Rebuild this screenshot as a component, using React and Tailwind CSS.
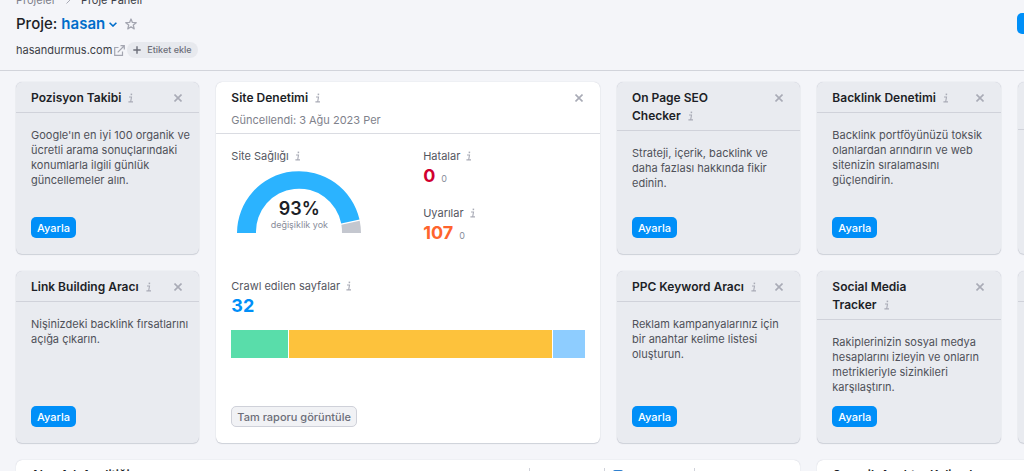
const InfoIcon = () => (
  <svg viewBox="0 0 6 10" className="h-2.5 w-1.5 shrink-0" fill="none" stroke="#a9abb6" strokeWidth="1.1" aria-hidden="true">
    <path d="M1 4h2.5L2.7 8.6M0.4 8.9h4.6" />
    <path d="M3.4 0.6v1.6" strokeWidth="1.5" />
  </svg>
);

const CloseButton = () => (
  <button type="button" aria-label="Kapat" className="flex h-[18px] w-3 shrink-0 items-center justify-center">
    <svg viewBox="0 0 8 8" className="h-2 w-2" stroke="#a9abb6" strokeWidth="1.6" fill="none">
      <path d="M0.5 0.5l7 7M7.5 0.5L0.5 7.5" />
    </svg>
  </button>
);

const Title = ({ children }) => {
  const words = children.split(" ");
  const last = words.pop();
  return (
    <h2 className="text-xs leading-[18px] font-semibold text-[#1d1f27]">
      {words.join(" ")}{" "}
      <span className="inline-flex items-center gap-[7px] align-top whitespace-nowrap">
        {last}
        <InfoIcon />
      </span>
    </h2>
  );
};

const Label = ({ children }) => (
  <div className="flex items-center gap-1.5 text-[11px] leading-4 text-[#55575f]">
    {children}
    <InfoIcon />
  </div>
);

const Count = ({ value, delta, color }) => (
  <p className={`flex items-baseline gap-1.5 text-lg leading-6 font-bold ${color}`}>
    {value}
    {delta !== undefined && <span className="text-[9px] font-normal text-[#898d9a]">{delta}</span>}
  </p>
);

function SetupCard({ title, text }) {
  return (
    <section className="flex flex-col rounded-md bg-[#e9ebf0] shadow-[0_0_1px_#b9bcc8,0_1px_1px_#d0d3da]">
      <header className="flex items-start justify-between gap-3 border-b border-[#d0d2da] px-[15px] pt-[7px] pb-[5px]">
        <Title>{title}</Title>
        <CloseButton />
      </header>
      <div className="flex flex-1 flex-col items-start pt-[15px] pr-[7px] pb-4 pl-[15px]">
        <p className="text-[11px] leading-[15px] text-[#4f5159]">{text}</p>
        <button type="button" className="mt-auto h-[21px] rounded-[5px] bg-[#008ff8] px-1.5 text-[11px] leading-4 font-medium text-white">
          Ayarla
        </button>
      </div>
    </section>
  );
}

function Gauge() {
  return (
    <div className="mt-[7px] ml-1.5 grid w-[124px]">
      <svg viewBox="0 0 124 62" className="col-start-1 row-start-1 w-full" aria-hidden="true">
        <path d="M0 62A62 62 0 0 1 122.5 48.6L104.2 52.5A43 43 0 0 0 19 62Z" fill="#2bb3ff" />
        <path d="M122.7 49.8A62 62 0 0 1 124 62H105A43 43 0 0 0 104.4 53.7Z" fill="#c4c7cf" />
      </svg>
      <div className="col-start-1 row-start-1 self-end text-center">
        <div className="text-lg leading-5 font-semibold text-[#1d1f27]">93%</div>
        <div className="pb-0.5 text-[9px] leading-3 text-[#898d9a]">değişiklik yok</div>
      </div>
    </div>
  );
}

function AuditCard() {
  return (
    <section className="col-span-2 row-span-2 flex flex-col rounded-md bg-white shadow-[0_0_1px_#b9bcc8,0_1px_1px_#d0d3da]">
      <header className="flex items-start justify-between border-b border-[#dadce2] px-[15px] pt-[7px] pb-[5px]">
        <div>
          <Title>Site Denetimi</Title>
          <p className="mt-[5px] text-[11px] leading-4 text-[#7f828c]">Güncellendi: 3 Ağu 2023 Per</p>
        </div>
        <CloseButton />
      </header>
      <div className="flex flex-1 flex-col px-[15px] pt-3.5 pb-4">
        <div className="grid grid-cols-2 gap-x-[30px]">
          <div>
            <Label>Site Sağlığı</Label>
            <Gauge />
          </div>
          <div>
            <Label>Hatalar</Label>
            <Count value="0" delta="0" color="text-[#d1002f]" />
            <div className="mt-3.5">
              <Label>Uyarılar</Label>
              <Count value="107" delta="0" color="text-[#ff642d]" />
            </div>
          </div>
        </div>
        <div className="mt-[30px]">
          <Label>Crawl edilen sayfalar</Label>
          <Count value="32" color="text-[#008ff8]" />
        </div>
        <div className="mt-3 flex h-7 gap-px">
          <div className="w-[16%] bg-[#59ddaa]" />
          <div className="flex-1 bg-[#fdc23c]" />
          <div className="w-[9%] bg-[#8ecdff]" />
        </div>
        <button type="button" className="mt-auto h-[21px] self-start rounded-[5px] border border-[#cfd1d9] bg-[#f1f2f5] px-[5px] text-[11px] leading-4 font-medium text-[#6c6e79]">
          Tam raporu görüntüle
        </button>
      </div>
    </section>
  );
}

export default function App() {
  return (
    <div className="h-screen overflow-hidden bg-[#f4f5f9] font-[Inter,sans-serif]">
      <div className="min-w-[1217px]">
        <div className="-mt-2 flex items-end justify-between border-b border-[#d2d4db] px-4 pb-3">
          <div>
            <nav className="flex items-center gap-2.5 text-[11px] leading-4">
              <a href="#projeler" className="text-[#7f828c]">Projeler</a>
              <svg viewBox="0 0 5 8" className="h-2 w-[5px]" fill="none" stroke="#a9abb6" aria-hidden="true"><path d="M0.5 0.5L4 4L0.5 7.5" /></svg>
              <span className="text-[#3c3e47]">Proje Paneli</span>
            </nav>
            <div className="mt-1.5 flex items-center text-[15px] leading-5 font-semibold">
              <h1 className="font-medium text-[#1d1f27]">Proje:</h1>
              <button type="button" className="ml-1 flex items-center gap-1 text-[#006dca]">
                hasan
                <svg viewBox="0 0 8 5" className="h-[5px] w-2" fill="none" stroke="currentColor" strokeWidth="1.6" aria-hidden="true"><path d="M0.6 0.7L4 4L7.4 0.7" /></svg>
              </button>
              <button type="button" aria-label="Favori" className="ml-2">
                <svg viewBox="0 0 12 12" className="h-3 w-3" fill="none" stroke="#a4a6b1" strokeWidth="1.3" strokeLinejoin="round"><path d="M6 1L7.4 4.4L11.2 4.7L8.3 7.1L9.2 10.9L6 8.8L2.8 10.9L3.7 7.1L0.8 4.7L4.6 4.4Z" /></svg>
              </button>
            </div>
            <div className="mt-2 flex items-center text-[11px] leading-4">
              <a href="#site" className="flex items-center gap-0.5 text-[#3c3e47]">
                hasandurmus.com
                <svg viewBox="0 0 11 11" className="h-[11px] w-[11px]" fill="none" stroke="#a4a6b1" strokeWidth="1.2" aria-hidden="true"><path d="M4.5 2.5H0.7V10.3H8.5V6.5M3.7 7.3L10 1M6.5 0.7H10.3V4.5" /></svg>
              </a>
              <button type="button" className="ml-0.5 flex h-4 items-center gap-1.5 rounded-full bg-[#e7e9ee] px-1.5 text-[9px] font-medium text-[#6c6e79]">
                <svg viewBox="0 0 8 8" className="h-2 w-2" stroke="currentColor" strokeWidth="1.4" aria-hidden="true"><path d="M4 0.3v7.4M0.3 4h7.4" /></svg>
                Etiket ekle
              </button>
            </div>
          </div>
          <button type="button" aria-label="Proje oluştur" className="mb-6 h-[21px] w-[184px] rounded-[5px] bg-[#008ff8]" />
        </div>

        <main className="grid auto-rows-[172px] grid-cols-6 gap-[17px] px-4 pt-[11px]">
          <SetupCard title="Pozisyon Takibi" text="Google'ın en iyi 100 organik ve ücretli arama sonuçlarındaki konumlarla ilgili günlük güncellemeler alın." />
          <AuditCard />
          <SetupCard title="On Page SEO Checker" text="Strateji, içerik, backlink ve daha fazlası hakkında fikir edinin." />
          <SetupCard title="Backlink Denetimi" text="Backlink portföyünüzü toksik olanlardan arındırın ve web sitenizin sıralamasını güçlendirin." />
          <section className="rounded-md bg-[#e9ebf0] shadow-[0_0_1px_#b9bcc8,0_1px_1px_#d0d3da]">
            <div className="h-12 border-b border-[#d0d2da]" />
          </section>
          <SetupCard title="Link Building Aracı" text="Nişinizdeki backlink fırsatlarını açığa çıkarın." />
          <SetupCard title="PPC Keyword Aracı" text="Reklam kampanyalarınız için bir anahtar kelime listesi oluşturun." />
          <SetupCard title="Social Media Tracker" text="Rakiplerinizin sosyal medya hesaplarını izleyin ve onların metrikleriyle sizinkileri karşılaştırın." />
          <section className="rounded-md bg-[#e9ebf0] shadow-[0_0_1px_#b9bcc8,0_1px_1px_#d0d3da]">
            <div className="h-[31px] border-b border-[#d0d2da]" />
          </section>
          <section className="col-span-4 flex items-start justify-between rounded-md bg-white px-[15px] pt-1.5 shadow-[0_0_1px_#b9bcc8]">
            <h2 className="text-xs leading-[18px] font-semibold text-[#1d1f27]">Alan Adı Analitiği</h2>
            <div className="mt-0.5 mr-[90px] flex h-[18px] items-stretch">
              <span className="w-[75px] border-l border-[#d0d2da]" />
              <span className="w-[91px] border-x border-[#d0d2da] pt-0.5 pl-2">
                <span className="block h-2.5 w-2.5 rounded-xs bg-[#2f80cf]" />
              </span>
            </div>
          </section>
          <section className="col-span-2 rounded-md bg-white px-[15px] pt-1.5 shadow-[0_0_1px_#b9bcc8]">
            <h2 className="text-xs leading-[18px] font-semibold text-[#1d1f27]">Organik Anahtar Kelimeler</h2>
          </section>
        </main>
      </div>
    </div>
  );
}
